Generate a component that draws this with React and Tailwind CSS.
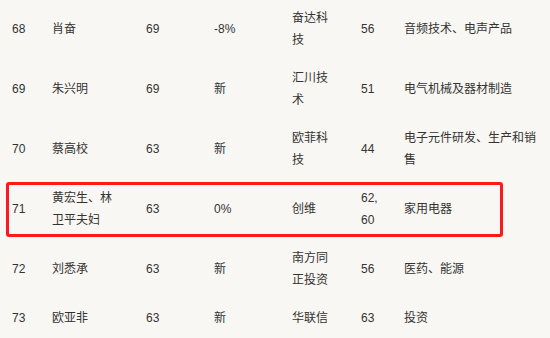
import React from "react";

const rows = [
  ["68", "肖奋", "69", "-8%", "奋达科技", "56", "音频技术、电声产品"],
  ["69", "朱兴明", "69", "新", "汇川技术", "51", "电气机械及器材制造"],
  ["70", "蔡高校", "63", "新", "欧菲科技", "44", "电子元件研发、生产和销售"],
  ["71", "黄宏生、林卫平夫妇", "63", "0%", "创维", "62, 60", "家用电器"],
  ["72", "刘悉承", "63", "新", "南方同正投资", "56", "医药、能源"],
  ["73", "欧亚非", "63", "新", "华联信", "63", "投资"],
];

// column widths + right padding so the CJK text wraps like the original table
const cols = [
  "w-[40px]",
  "w-[94px] pr-[28px]",
  "w-[68px]",
  "w-[78px]",
  "w-[69px] pr-[26px]",
  "w-[43px] pr-[16px]",
  "w-[140px]",
];

export default function App() {
  return (
    <div
      className="relative w-[550px] h-[338px] overflow-hidden bg-[#f8f7f4] text-[#333333] text-[12px] leading-[22px]"
      style={{ fontFamily: '"Liberation Sans", "Noto Sans CJK SC", sans-serif' }}
    >
      <div className="-mt-[1px] pl-[12px]">
        {rows.map((r) => (
          <div key={r[0]} className="flex items-center py-[8px]">
            {r.map((cell, i) => (
              <div key={i} className={`shrink-0 ${cols[i]}`}>
                {cell}
              </div>
            ))}
          </div>
        ))}
      </div>

      {/* red highlight box */}
      <div className="absolute left-[6px] top-[182px] w-[497px] h-[55px] border-[3px] border-[#ff1a1a] rounded-[3px]" />
    </div>
  );
}
